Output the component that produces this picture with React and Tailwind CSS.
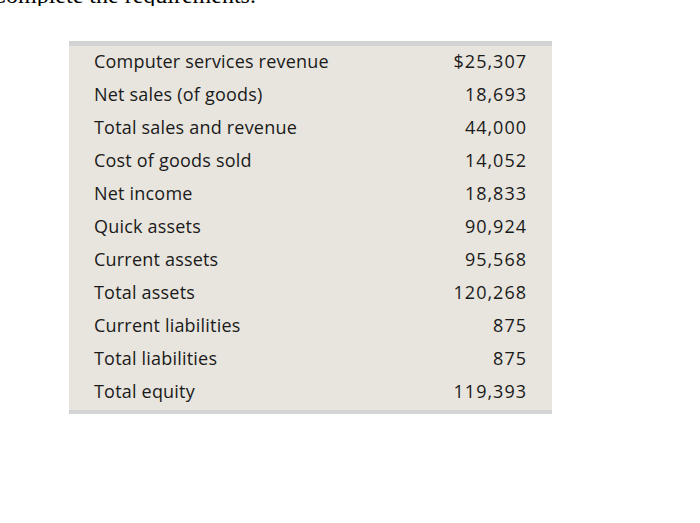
import React from 'react';

const rows = [
  ['Computer services revenue', '$25,307'],
  ['Net sales (of goods)', '18,693'],
  ['Total sales and revenue', '44,000'],
  ['Cost of goods sold', '14,052'],
  ['Net income', '18,833'],
  ['Quick assets', '90,924'],
  ['Current assets', '95,568'],
  ['Total assets', '120,268'],
  ['Current liabilities', '875'],
  ['Total liabilities', '875'],
  ['Total equity', '119,393'],
];

const App = () => {
  return (
    <div className="w-[700px] h-[523px] bg-white overflow-hidden relative">
      {/* cut-off prompt line from the page above */}
      <div className="h-[6px] overflow-hidden">
        <p className="-mt-[17px] -ml-[10px] text-[24px] leading-[24px] text-black font-['Liberation_Serif',serif]">
          Complete the requirements.
        </p>
      </div>

      <div className="ml-[69px] mt-[35px] w-[483px] bg-[#e8e5de] border-t-[5px] border-b-[4px] border-[#d3d3d3] font-['Open_Sans',sans-serif] text-[18px] text-[#1a1a1a]">
        <div className="-mt-[1px] pb-[2px]">
          {rows.map(([label, value]) => (
            <div key={label} className="h-[33px] flex items-center justify-between pl-[25px] pr-[25px]">
              <span className="tracking-[0.2px]">{label}</span>
              <span className="tracking-[1px]">{value}</span>
            </div>
          ))}
        </div>
      </div>
    </div>
  );
};

export default App;
